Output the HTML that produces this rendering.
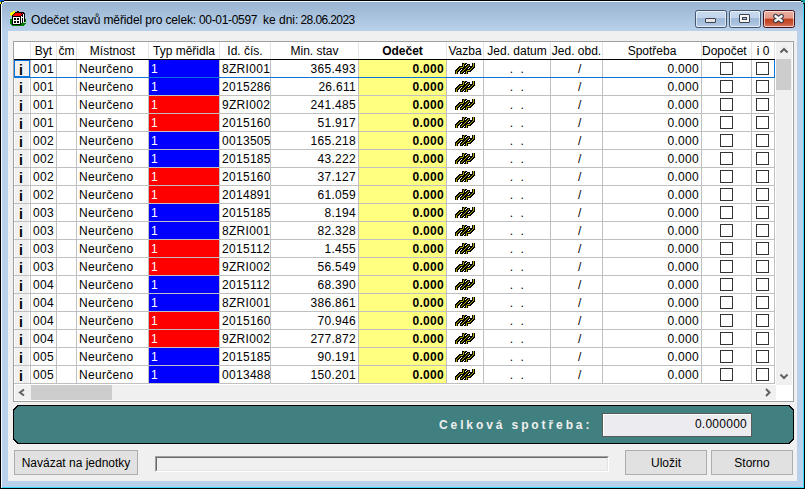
<!DOCTYPE html><html><head><meta charset="utf-8"><style>
*{margin:0;padding:0;box-sizing:border-box}
html,body{width:805px;height:489px;overflow:hidden;background:#b9d1ea}
body{position:relative;font-family:"Liberation Sans",sans-serif;font-size:12px;color:#000}
.ab{position:absolute}
.t{position:absolute;white-space:nowrap;line-height:14px;height:14px}
.cell{position:absolute;overflow:hidden;white-space:nowrap;line-height:17px;height:17px;letter-spacing:0.3px}
.tx{position:absolute;white-space:nowrap;line-height:17px;height:17px;letter-spacing:0.3px}
.cb{position:absolute;width:13px;height:13px;border:1px solid #333;background:#fff}
.capbtn{position:absolute;top:10px;height:18px;border:1px solid #45546a;border-radius:2.5px;
 background:linear-gradient(#c8daee 0,#c2d5eb 42%,#9fbad9 47%,#a6bfdc 75%,#b9d0ea 100%);box-shadow:inset 0 0 0 1px rgba(255,255,255,.6)}
.btn{position:absolute;height:25px;border:1px solid #adadad;background:#e1e1e1;text-align:center;line-height:24px}
</style></head><body>
<svg width="0" height="0" style="position:absolute"><defs><g id="vz"><rect x="2" y="9" width="1" height="1" fill="#000"/><rect x="2" y="10" width="1" height="1" fill="#000"/><rect x="2" y="11" width="1" height="1" fill="#000"/><rect x="2" y="12" width="1" height="1" fill="#000"/><rect x="3" y="8" width="1" height="1" fill="#000"/><rect x="3" y="9" width="1" height="1" fill="#000"/><rect x="3" y="10" width="1" height="1" fill="#000"/><rect x="3" y="11" width="1" height="1" fill="#000"/><rect x="3" y="12" width="1" height="1" fill="#000"/><rect x="4" y="7" width="1" height="1" fill="#000"/><rect x="4" y="8" width="1" height="1" fill="#000"/><rect x="4" y="9" width="1" height="1" fill="#000"/><rect x="4" y="10" width="1" height="1" fill="#000"/><rect x="4" y="11" width="1" height="1" fill="#000"/><rect x="4" y="12" width="1" height="1" fill="#000"/><rect x="5" y="6" width="1" height="1" fill="#000"/><rect x="5" y="7" width="1" height="1" fill="#000"/><rect x="5" y="8" width="1" height="1" fill="#000"/><rect x="5" y="9" width="1" height="1" fill="#000"/><rect x="5" y="10" width="1" height="1" fill="#000"/><rect x="6" y="5" width="1" height="1" fill="#000"/><rect x="6" y="6" width="1" height="1" fill="#000"/><rect x="6" y="7" width="1" height="1" fill="#000"/><rect x="6" y="8" width="1" height="1" fill="#000"/><rect x="6" y="9" width="1" height="1" fill="#000"/><rect x="7" y="5" width="1" height="1" fill="#000"/><rect x="7" y="6" width="1" height="1" fill="#000"/><rect x="7" y="7" width="1" height="1" fill="#000"/><rect x="7" y="8" width="1" height="1" fill="#000"/><rect x="7" y="10" width="1" height="1" fill="#000"/><rect x="7" y="11" width="1" height="1" fill="#000"/><rect x="7" y="12" width="1" height="1" fill="#000"/><rect x="8" y="5" width="1" height="1" fill="#000"/><rect x="8" y="6" width="1" height="1" fill="#000"/><rect x="8" y="7" width="1" height="1" fill="#000"/><rect x="8" y="9" width="1" height="1" fill="#000"/><rect x="8" y="10" width="1" height="1" fill="#000"/><rect x="8" y="11" width="1" height="1" fill="#000"/><rect x="8" y="12" width="1" height="1" fill="#000"/><rect x="9" y="2" width="1" height="1" fill="#000"/><rect x="9" y="3" width="1" height="1" fill="#000"/><rect x="9" y="4" width="1" height="1" fill="#000"/><rect x="9" y="5" width="1" height="1" fill="#000"/><rect x="9" y="6" width="1" height="1" fill="#000"/><rect x="9" y="7" width="1" height="1" fill="#000"/><rect x="9" y="8" width="1" height="1" fill="#000"/><rect x="9" y="9" width="1" height="1" fill="#000"/><rect x="9" y="10" width="1" height="1" fill="#000"/><rect x="9" y="11" width="1" height="1" fill="#000"/><rect x="9" y="12" width="1" height="1" fill="#000"/><rect x="10" y="2" width="1" height="1" fill="#000"/><rect x="10" y="3" width="1" height="1" fill="#000"/><rect x="10" y="4" width="1" height="1" fill="#000"/><rect x="10" y="5" width="1" height="1" fill="#000"/><rect x="10" y="6" width="1" height="1" fill="#000"/><rect x="10" y="7" width="1" height="1" fill="#000"/><rect x="10" y="8" width="1" height="1" fill="#000"/><rect x="10" y="9" width="1" height="1" fill="#000"/><rect x="10" y="10" width="1" height="1" fill="#000"/><rect x="10" y="11" width="1" height="1" fill="#000"/><rect x="11" y="2" width="1" height="1" fill="#000"/><rect x="11" y="3" width="1" height="1" fill="#000"/><rect x="11" y="4" width="1" height="1" fill="#000"/><rect x="11" y="5" width="1" height="1" fill="#000"/><rect x="11" y="6" width="1" height="1" fill="#000"/><rect x="11" y="7" width="1" height="1" fill="#000"/><rect x="11" y="8" width="1" height="1" fill="#000"/><rect x="11" y="9" width="1" height="1" fill="#000"/><rect x="11" y="10" width="1" height="1" fill="#000"/><rect x="11" y="12" width="1" height="1" fill="#000"/><rect x="12" y="2" width="1" height="1" fill="#000"/><rect x="12" y="3" width="1" height="1" fill="#000"/><rect x="12" y="5" width="1" height="1" fill="#000"/><rect x="12" y="6" width="1" height="1" fill="#000"/><rect x="12" y="7" width="1" height="1" fill="#000"/><rect x="12" y="8" width="1" height="1" fill="#000"/><rect x="12" y="9" width="1" height="1" fill="#000"/><rect x="12" y="10" width="1" height="1" fill="#000"/><rect x="12" y="11" width="1" height="1" fill="#000"/><rect x="12" y="12" width="1" height="1" fill="#000"/><rect x="13" y="2" width="1" height="1" fill="#000"/><rect x="13" y="4" width="1" height="1" fill="#000"/><rect x="13" y="5" width="1" height="1" fill="#000"/><rect x="13" y="6" width="1" height="1" fill="#000"/><rect x="13" y="7" width="1" height="1" fill="#000"/><rect x="13" y="8" width="1" height="1" fill="#000"/><rect x="13" y="9" width="1" height="1" fill="#000"/><rect x="13" y="10" width="1" height="1" fill="#000"/><rect x="13" y="11" width="1" height="1" fill="#000"/><rect x="13" y="12" width="1" height="1" fill="#000"/><rect x="14" y="3" width="1" height="1" fill="#000"/><rect x="14" y="4" width="1" height="1" fill="#000"/><rect x="14" y="5" width="1" height="1" fill="#000"/><rect x="14" y="6" width="1" height="1" fill="#000"/><rect x="14" y="7" width="1" height="1" fill="#000"/><rect x="14" y="8" width="1" height="1" fill="#000"/><rect x="14" y="9" width="1" height="1" fill="#000"/><rect x="14" y="10" width="1" height="1" fill="#000"/><rect x="14" y="11" width="1" height="1" fill="#000"/><rect x="14" y="12" width="1" height="1" fill="#000"/><rect x="15" y="3" width="1" height="1" fill="#000"/><rect x="15" y="4" width="1" height="1" fill="#000"/><rect x="15" y="5" width="1" height="1" fill="#000"/><rect x="15" y="6" width="1" height="1" fill="#000"/><rect x="15" y="8" width="1" height="1" fill="#000"/><rect x="15" y="9" width="1" height="1" fill="#000"/><rect x="15" y="10" width="1" height="1" fill="#000"/><rect x="16" y="3" width="1" height="1" fill="#000"/><rect x="16" y="4" width="1" height="1" fill="#000"/><rect x="16" y="5" width="1" height="1" fill="#000"/><rect x="16" y="7" width="1" height="1" fill="#000"/><rect x="16" y="8" width="1" height="1" fill="#000"/><rect x="16" y="9" width="1" height="1" fill="#000"/><rect x="16" y="10" width="1" height="1" fill="#000"/><rect x="17" y="5" width="1" height="1" fill="#000"/><rect x="17" y="6" width="1" height="1" fill="#000"/><rect x="17" y="7" width="1" height="1" fill="#000"/><rect x="17" y="8" width="1" height="1" fill="#000"/><rect x="17" y="9" width="1" height="1" fill="#000"/><rect x="17" y="10" width="1" height="1" fill="#000"/><rect x="18" y="5" width="1" height="1" fill="#000"/><rect x="18" y="6" width="1" height="1" fill="#000"/><rect x="18" y="7" width="1" height="1" fill="#000"/><rect x="18" y="8" width="1" height="1" fill="#000"/><rect x="18" y="9" width="1" height="1" fill="#000"/><rect x="19" y="2" width="1" height="1" fill="#000"/><rect x="19" y="3" width="1" height="1" fill="#000"/><rect x="19" y="4" width="1" height="1" fill="#000"/><rect x="19" y="5" width="1" height="1" fill="#000"/><rect x="19" y="6" width="1" height="1" fill="#000"/><rect x="19" y="7" width="1" height="1" fill="#000"/><rect x="19" y="8" width="1" height="1" fill="#000"/><rect x="20" y="2" width="1" height="1" fill="#000"/><rect x="20" y="3" width="1" height="1" fill="#000"/><rect x="20" y="4" width="1" height="1" fill="#000"/><rect x="20" y="5" width="1" height="1" fill="#000"/><rect x="20" y="6" width="1" height="1" fill="#000"/><rect x="20" y="7" width="1" height="1" fill="#000"/><rect x="21" y="2" width="1" height="1" fill="#000"/><rect x="21" y="3" width="1" height="1" fill="#000"/><rect x="21" y="4" width="1" height="1" fill="#000"/><rect x="21" y="5" width="1" height="1" fill="#000"/><rect x="21" y="6" width="1" height="1" fill="#000"/><rect x="3" y="10" width="1" height="1" fill="#b0a800"/><rect x="3" y="11" width="1" height="1" fill="#b0a800"/><rect x="3" y="12" width="1" height="1" fill="#b0a800"/><rect x="4" y="9" width="1" height="1" fill="#b0a800"/><rect x="5" y="8" width="1" height="1" fill="#b0a800"/><rect x="6" y="7" width="1" height="1" fill="#b0a800"/><rect x="7" y="6" width="1" height="1" fill="#b0a800"/><rect x="8" y="6" width="1" height="1" fill="#b0a800"/><rect x="9" y="6" width="1" height="1" fill="#b0a800"/><rect x="11" y="2" width="1" height="1" fill="#b0a800"/><rect x="10" y="3" width="1" height="1" fill="#b0a800"/><rect x="10" y="4" width="1" height="1" fill="#b0a800"/><rect x="10" y="5" width="1" height="1" fill="#b0a800"/><rect x="20" y="2" width="1" height="1" fill="#b0a800"/><rect x="20" y="3" width="1" height="1" fill="#b0a800"/><rect x="20" y="4" width="1" height="1" fill="#b0a800"/><rect x="20" y="5" width="1" height="1" fill="#b0a800"/><rect x="19" y="6" width="1" height="1" fill="#b0a800"/><rect x="18" y="7" width="1" height="1" fill="#b0a800"/><rect x="17" y="8" width="1" height="1" fill="#b0a800"/><rect x="14" y="9" width="1" height="1" fill="#b0a800"/><rect x="15" y="9" width="1" height="1" fill="#b0a800"/><rect x="16" y="9" width="1" height="1" fill="#b0a800"/><rect x="13" y="10" width="1" height="1" fill="#b0a800"/><rect x="13" y="11" width="1" height="1" fill="#b0a800"/><rect x="13" y="12" width="1" height="1" fill="#b0a800"/><rect x="8" y="11" width="1" height="1" fill="#b0a800"/><rect x="9" y="10" width="1" height="1" fill="#b0a800"/><rect x="10" y="9" width="1" height="1" fill="#b0a800"/><rect x="11" y="8" width="1" height="1" fill="#b0a800"/><rect x="12" y="7" width="1" height="1" fill="#b0a800"/><rect x="13" y="6" width="1" height="1" fill="#b0a800"/><rect x="14" y="5" width="1" height="1" fill="#b0a800"/><rect x="15" y="4" width="1" height="1" fill="#b0a800"/></g></defs></svg>
<div style="position:absolute;left:0px;top:0px;width:805px;height:489px;background:#000"></div>
<div style="position:absolute;left:1px;top:1px;width:803px;height:487px;background:#38d8f8"></div>
<div style="position:absolute;left:1px;top:1px;width:803px;height:1px;background:#f4f8fc"></div>
<div style="position:absolute;left:1px;top:1px;width:1px;height:487px;background:#f4f8fc"></div>
<div class="ab" style="left:2px;top:2px;width:801px;height:485px;background:#b9d1ea"></div>
<div class="ab" style="left:2px;top:2px;width:801px;height:29px;background:linear-gradient(#99b4d1,#b9d1ea)"></div>
<div style="position:absolute;left:0px;top:0px;width:4px;height:1px;background:#0060d8"></div>
<div style="position:absolute;left:0px;top:1px;width:2px;height:1px;background:#0060d8"></div>
<div style="position:absolute;left:0px;top:2px;width:1px;height:2px;background:#ffff00"></div>
<div style="position:absolute;left:1px;top:1px;width:1px;height:3px;background:#202020"></div>
<div style="position:absolute;left:2px;top:1px;width:2px;height:1px;background:#202020"></div>
<div style="position:absolute;left:2px;top:2px;width:1px;height:2px;background:#e8f0f8"></div>
<div style="position:absolute;left:3px;top:2px;width:1px;height:1px;background:#e8f0f8"></div>
<div style="position:absolute;left:801px;top:0px;width:4px;height:1px;background:#10a0a0"></div>
<div style="position:absolute;left:803px;top:1px;width:2px;height:2px;background:#10a0a0"></div>
<div style="position:absolute;left:802px;top:1px;width:1px;height:1px;background:#202020"></div>
<div style="position:absolute;left:803px;top:3px;width:1px;height:1px;background:#202020"></div>
<div style="position:absolute;left:801px;top:1px;width:1px;height:1px;background:#202020"></div>
<div style="position:absolute;left:802px;top:2px;width:1px;height:1px;background:#c8f4ff"></div>
<svg class="ab" style="left:9px;top:10px" width="18" height="18" viewBox="0 0 18 18" shape-rendering="crispEdges"><rect x="1" y="9" width="16" height="5" fill="#008000"/><rect x="2" y="14" width="14" height="1" fill="#008000"/><rect x="3" y="15" width="12" height="1" fill="#008000"/><rect x="4" y="1" width="2" height="1" fill="#ffff00"/><rect x="2" y="2" width="4" height="1" fill="#ffff00"/><rect x="1" y="3" width="4" height="1" fill="#ffff00"/><rect x="1" y="4" width="3" height="1" fill="#ffff00"/><rect x="2" y="5" width="1" height="1" fill="#ffff00"/><rect x="8" y="1" width="2" height="2" fill="#000"/><rect x="6" y="2" width="9" height="1" fill="#000"/><rect x="5" y="3" width="1" height="1" fill="#000"/><rect x="4" y="4" width="1" height="1" fill="#000"/><rect x="3" y="5" width="1" height="1" fill="#000"/><rect x="6" y="3" width="6" height="1" fill="#ff0000"/><rect x="5" y="4" width="7" height="1" fill="#ff0000"/><rect x="4" y="5" width="8" height="1" fill="#ff0000"/><rect x="12" y="3" width="4" height="10" fill="#000"/><rect x="12" y="3" width="1" height="1" fill="#000"/><rect x="13" y="3" width="1" height="1" fill="#ff0000"/><rect x="12" y="4" width="1" height="1" fill="#ff0000"/><rect x="12" y="6" width="1" height="7" fill="#fff"/><rect x="14" y="4" width="1" height="8" fill="#fff"/><rect x="13" y="7" width="1" height="1" fill="#fff"/><rect x="14" y="12" width="3" height="1" fill="#c8c8c8"/><rect x="3" y="6" width="9" height="9" fill="#000"/><rect x="4" y="7" width="7" height="7" fill="#fff"/><rect x="5" y="8" width="2" height="2" fill="#000"/><rect x="8" y="8" width="2" height="2" fill="#000"/><rect x="5" y="11" width="2" height="2" fill="#000"/><rect x="8" y="11" width="2" height="2" fill="#000"/></svg>
<div class="t" style="left:31px;top:13px;letter-spacing:-0.12px">Odečet stavů měřidel pro celek:</div>
<div class="t" style="left:199px;top:13px;letter-spacing:-0.33px">00-01-0597</div>
<div class="t" style="left:263px;top:13px;">ke dni:</div>
<div class="t" style="left:300.5px;top:13px;letter-spacing:-0.6px">28.06.2023</div>
<div class="capbtn" style="left:695px;width:32px"></div>
<div class="ab" style="left:705px;top:18px;width:11px;height:5px;border:1px solid #3a4250;border-radius:1px;background:#e6e6e6"></div>
<div class="capbtn" style="left:729px;width:32px"></div>
<div class="ab" style="left:739px;top:14px;width:11px;height:9px;border:1px solid #3a4250;border-radius:1px;background:#f4f4f4"></div>
<div class="ab" style="left:742px;top:17px;width:5px;height:3px;border:1px solid #3a4250;background:#a8c0dc"></div>
<div class="capbtn" style="left:763px;width:32px;border-color:#4a1018;background:linear-gradient(#eab0a0 0,#e49a88 45%,#c0401c 50%,#c85030 75%,#d87a64 100%)"></div>
<svg class="ab" style="left:772px;top:13px" width="14" height="11" viewBox="0 0 14 11"><path d="M3.5 3.2L9.5 7.8M9.5 3.2L3.5 7.8" stroke="#3a3a4a" stroke-width="4.8" stroke-linecap="round"/><path d="M3.5 3.2L9.5 7.8M9.5 3.2L3.5 7.8" stroke="#f4f4f4" stroke-width="2.7" stroke-linecap="round"/></svg>
<div style="position:absolute;left:8px;top:31px;width:789px;height:450px;background:#f0f0f0"></div>
<div class="ab" style="left:13px;top:41px;width:781px;height:361px;border:1px solid #a0a0a0;background:#fff"></div>
<div style="position:absolute;left:30px;top:42px;width:1px;height:17px;background:#e5e5e5"></div>
<div class="cell" style="left:31px;top:43px;width:25px;height:16px;text-align:center;font-weight:normal;line-height:17px;letter-spacing:0">Byt</div>
<div style="position:absolute;left:56px;top:42px;width:1px;height:17px;background:#e5e5e5"></div>
<div class="cell" style="left:57px;top:43px;width:19px;height:16px;text-align:center;font-weight:normal;line-height:17px;letter-spacing:0">čm</div>
<div style="position:absolute;left:76px;top:42px;width:1px;height:17px;background:#e5e5e5"></div>
<div class="cell" style="left:77px;top:43px;width:71px;height:16px;text-align:center;font-weight:normal;line-height:17px;letter-spacing:0">Místnost</div>
<div style="position:absolute;left:148px;top:42px;width:1px;height:17px;background:#e5e5e5"></div>
<div class="cell" style="left:149px;top:43px;width:70px;height:16px;text-align:center;font-weight:normal;line-height:17px;letter-spacing:0">Typ měřidla</div>
<div style="position:absolute;left:219px;top:42px;width:1px;height:17px;background:#e5e5e5"></div>
<div class="cell" style="left:220px;top:43px;width:50px;height:16px;text-align:center;font-weight:normal;line-height:17px;letter-spacing:0">Id. čís.</div>
<div style="position:absolute;left:270px;top:42px;width:1px;height:17px;background:#e5e5e5"></div>
<div class="cell" style="left:271px;top:43px;width:87px;height:16px;text-align:center;font-weight:normal;line-height:17px;letter-spacing:0">Min. stav</div>
<div style="position:absolute;left:358px;top:42px;width:1px;height:17px;background:#e5e5e5"></div>
<div class="cell" style="left:359px;top:43px;width:87px;height:16px;text-align:center;font-weight:bold;line-height:17px;letter-spacing:0">Odečet</div>
<div style="position:absolute;left:446px;top:42px;width:1px;height:17px;background:#e5e5e5"></div>
<div class="cell" style="left:447px;top:43px;width:36px;height:16px;text-align:center;font-weight:normal;line-height:17px;letter-spacing:0">Vazba</div>
<div style="position:absolute;left:483px;top:42px;width:1px;height:17px;background:#e5e5e5"></div>
<div class="cell" style="left:484px;top:43px;width:66px;height:16px;text-align:center;font-weight:normal;line-height:17px;letter-spacing:0">Jed. datum</div>
<div style="position:absolute;left:550px;top:42px;width:1px;height:17px;background:#e5e5e5"></div>
<div class="cell" style="left:551px;top:43px;width:51px;height:16px;text-align:center;font-weight:normal;line-height:17px;letter-spacing:0">Jed. obd.</div>
<div style="position:absolute;left:602px;top:42px;width:1px;height:17px;background:#e5e5e5"></div>
<div class="cell" style="left:603px;top:43px;width:98px;height:16px;text-align:center;font-weight:normal;line-height:17px;letter-spacing:0">Spotřeba</div>
<div style="position:absolute;left:701px;top:42px;width:1px;height:17px;background:#e5e5e5"></div>
<div class="cell" style="left:702px;top:43px;width:49px;height:16px;text-align:left;font-weight:normal;line-height:17px;letter-spacing:0">Dopočet</div>
<div style="position:absolute;left:751px;top:42px;width:1px;height:17px;background:#e5e5e5"></div>
<div class="cell" style="left:752px;top:43px;width:22px;height:16px;text-align:center;font-weight:normal;line-height:17px;letter-spacing:0">i 0</div>
<div style="position:absolute;left:774px;top:42px;width:1px;height:17px;background:#e5e5e5"></div>
<div style="position:absolute;left:14px;top:59px;width:761px;height:1px;background:#000"></div>
<div style="position:absolute;left:14px;top:77px;width:761px;height:1px;background:#0a74da"></div>
<div style="position:absolute;left:30px;top:60px;width:1px;height:17px;background:#c0c0c0"></div>
<div style="position:absolute;left:56px;top:60px;width:1px;height:17px;background:#c0c0c0"></div>
<div style="position:absolute;left:76px;top:60px;width:1px;height:17px;background:#c0c0c0"></div>
<div style="position:absolute;left:148px;top:60px;width:1px;height:17px;background:#c0c0c0"></div>
<div style="position:absolute;left:219px;top:60px;width:1px;height:17px;background:#c0c0c0"></div>
<div style="position:absolute;left:270px;top:60px;width:1px;height:17px;background:#c0c0c0"></div>
<div style="position:absolute;left:358px;top:60px;width:1px;height:17px;background:#c0c0c0"></div>
<div style="position:absolute;left:446px;top:60px;width:1px;height:17px;background:#c0c0c0"></div>
<div style="position:absolute;left:483px;top:60px;width:1px;height:17px;background:#c0c0c0"></div>
<div style="position:absolute;left:550px;top:60px;width:1px;height:17px;background:#c0c0c0"></div>
<div style="position:absolute;left:602px;top:60px;width:1px;height:17px;background:#c0c0c0"></div>
<div style="position:absolute;left:701px;top:60px;width:1px;height:17px;background:#c0c0c0"></div>
<div style="position:absolute;left:751px;top:60px;width:1px;height:17px;background:#c0c0c0"></div>
<div style="position:absolute;left:774px;top:60px;width:1px;height:17px;background:#c0c0c0"></div>
<div style="position:absolute;left:14px;top:60px;width:16px;height:17px;background:#fff"></div>
<div style="position:absolute;left:15px;top:60px;width:14px;height:17px;background:#f0f0f0"></div>
<div class="tx" style="left:19px;top:63px;font-weight:bold;font-size:14px;line-height:15px;height:15px">i</div>
<div class="tx" style="left:33px;top:61px">001</div>
<div class="tx" style="left:79px;top:61px">Neurčeno</div>
<div style="position:absolute;left:149px;top:60px;width:70px;height:17px;background:#0000ff"></div>
<div class="tx" style="left:151px;top:61px;color:#fff">1</div>
<div class="cell" style="left:222px;top:61px;width:48px;height:16px">8ZRI001</div>
<div class="tx" style="left:271px;top:61px;width:85px;text-align:right">365.493</div>
<div style="position:absolute;left:359px;top:60px;width:87px;height:17px;background:#ffff80"></div>
<div class="tx" style="left:359px;top:61px;width:85px;text-align:right;font-weight:bold">0.000</div>
<div class="ab" style="left:453px;top:61px;width:24px;height:16px"><svg width="24" height="16" viewBox="0 0 24 16" shape-rendering="crispEdges" style="position:absolute;left:0;top:0"><use href="#vz"/></svg></div>
<div class="tx" style="left:484px;top:61px;width:66px;text-align:center">.&nbsp; .</div>
<div class="tx" style="left:578px;top:61px">/</div>
<div class="tx" style="left:603px;top:61px;width:96px;text-align:right">0.000</div>
<div class="cb" style="left:720px;top:62px"></div>
<div class="cb" style="left:756px;top:62px"></div>
<div style="position:absolute;left:14px;top:95px;width:761px;height:1px;background:#c0c0c0"></div>
<div style="position:absolute;left:30px;top:78px;width:1px;height:17px;background:#c0c0c0"></div>
<div style="position:absolute;left:56px;top:78px;width:1px;height:17px;background:#c0c0c0"></div>
<div style="position:absolute;left:76px;top:78px;width:1px;height:17px;background:#c0c0c0"></div>
<div style="position:absolute;left:148px;top:78px;width:1px;height:17px;background:#c0c0c0"></div>
<div style="position:absolute;left:219px;top:78px;width:1px;height:17px;background:#c0c0c0"></div>
<div style="position:absolute;left:270px;top:78px;width:1px;height:17px;background:#c0c0c0"></div>
<div style="position:absolute;left:358px;top:78px;width:1px;height:17px;background:#c0c0c0"></div>
<div style="position:absolute;left:446px;top:78px;width:1px;height:17px;background:#c0c0c0"></div>
<div style="position:absolute;left:483px;top:78px;width:1px;height:17px;background:#c0c0c0"></div>
<div style="position:absolute;left:550px;top:78px;width:1px;height:17px;background:#c0c0c0"></div>
<div style="position:absolute;left:602px;top:78px;width:1px;height:17px;background:#c0c0c0"></div>
<div style="position:absolute;left:701px;top:78px;width:1px;height:17px;background:#c0c0c0"></div>
<div style="position:absolute;left:751px;top:78px;width:1px;height:17px;background:#c0c0c0"></div>
<div style="position:absolute;left:774px;top:78px;width:1px;height:17px;background:#c0c0c0"></div>
<div style="position:absolute;left:14px;top:78px;width:16px;height:17px;background:#fff"></div>
<div style="position:absolute;left:15px;top:78px;width:14px;height:17px;background:#f0f0f0"></div>
<div class="tx" style="left:19px;top:81px;font-weight:bold;font-size:14px;line-height:15px;height:15px">i</div>
<div class="tx" style="left:33px;top:79px">001</div>
<div class="tx" style="left:79px;top:79px">Neurčeno</div>
<div style="position:absolute;left:149px;top:78px;width:70px;height:17px;background:#0000ff"></div>
<div class="tx" style="left:151px;top:79px;color:#fff">1</div>
<div class="cell" style="left:222px;top:79px;width:48px;height:16px">2015286</div>
<div class="tx" style="left:271px;top:79px;width:85px;text-align:right">26.611</div>
<div style="position:absolute;left:359px;top:78px;width:87px;height:17px;background:#ffff80"></div>
<div class="tx" style="left:359px;top:79px;width:85px;text-align:right;font-weight:bold">0.000</div>
<div class="ab" style="left:453px;top:79px;width:24px;height:16px"><svg width="24" height="16" viewBox="0 0 24 16" shape-rendering="crispEdges" style="position:absolute;left:0;top:0"><use href="#vz"/></svg></div>
<div class="tx" style="left:484px;top:79px;width:66px;text-align:center">.&nbsp; .</div>
<div class="tx" style="left:578px;top:79px">/</div>
<div class="tx" style="left:603px;top:79px;width:96px;text-align:right">0.000</div>
<div class="cb" style="left:720px;top:80px"></div>
<div class="cb" style="left:756px;top:80px"></div>
<div style="position:absolute;left:14px;top:113px;width:761px;height:1px;background:#c0c0c0"></div>
<div style="position:absolute;left:30px;top:96px;width:1px;height:17px;background:#c0c0c0"></div>
<div style="position:absolute;left:56px;top:96px;width:1px;height:17px;background:#c0c0c0"></div>
<div style="position:absolute;left:76px;top:96px;width:1px;height:17px;background:#c0c0c0"></div>
<div style="position:absolute;left:148px;top:96px;width:1px;height:17px;background:#c0c0c0"></div>
<div style="position:absolute;left:219px;top:96px;width:1px;height:17px;background:#c0c0c0"></div>
<div style="position:absolute;left:270px;top:96px;width:1px;height:17px;background:#c0c0c0"></div>
<div style="position:absolute;left:358px;top:96px;width:1px;height:17px;background:#c0c0c0"></div>
<div style="position:absolute;left:446px;top:96px;width:1px;height:17px;background:#c0c0c0"></div>
<div style="position:absolute;left:483px;top:96px;width:1px;height:17px;background:#c0c0c0"></div>
<div style="position:absolute;left:550px;top:96px;width:1px;height:17px;background:#c0c0c0"></div>
<div style="position:absolute;left:602px;top:96px;width:1px;height:17px;background:#c0c0c0"></div>
<div style="position:absolute;left:701px;top:96px;width:1px;height:17px;background:#c0c0c0"></div>
<div style="position:absolute;left:751px;top:96px;width:1px;height:17px;background:#c0c0c0"></div>
<div style="position:absolute;left:774px;top:96px;width:1px;height:17px;background:#c0c0c0"></div>
<div style="position:absolute;left:14px;top:96px;width:16px;height:17px;background:#fff"></div>
<div style="position:absolute;left:15px;top:96px;width:14px;height:17px;background:#f0f0f0"></div>
<div class="tx" style="left:19px;top:99px;font-weight:bold;font-size:14px;line-height:15px;height:15px">i</div>
<div class="tx" style="left:33px;top:97px">001</div>
<div class="tx" style="left:79px;top:97px">Neurčeno</div>
<div style="position:absolute;left:149px;top:96px;width:70px;height:17px;background:#ff0000"></div>
<div class="tx" style="left:151px;top:97px;color:#fff">1</div>
<div class="cell" style="left:222px;top:97px;width:48px;height:16px">9ZRI002</div>
<div class="tx" style="left:271px;top:97px;width:85px;text-align:right">241.485</div>
<div style="position:absolute;left:359px;top:96px;width:87px;height:17px;background:#ffff80"></div>
<div class="tx" style="left:359px;top:97px;width:85px;text-align:right;font-weight:bold">0.000</div>
<div class="ab" style="left:453px;top:97px;width:24px;height:16px"><svg width="24" height="16" viewBox="0 0 24 16" shape-rendering="crispEdges" style="position:absolute;left:0;top:0"><use href="#vz"/></svg></div>
<div class="tx" style="left:484px;top:97px;width:66px;text-align:center">.&nbsp; .</div>
<div class="tx" style="left:578px;top:97px">/</div>
<div class="tx" style="left:603px;top:97px;width:96px;text-align:right">0.000</div>
<div class="cb" style="left:720px;top:98px"></div>
<div class="cb" style="left:756px;top:98px"></div>
<div style="position:absolute;left:14px;top:131px;width:761px;height:1px;background:#c0c0c0"></div>
<div style="position:absolute;left:30px;top:114px;width:1px;height:17px;background:#c0c0c0"></div>
<div style="position:absolute;left:56px;top:114px;width:1px;height:17px;background:#c0c0c0"></div>
<div style="position:absolute;left:76px;top:114px;width:1px;height:17px;background:#c0c0c0"></div>
<div style="position:absolute;left:148px;top:114px;width:1px;height:17px;background:#c0c0c0"></div>
<div style="position:absolute;left:219px;top:114px;width:1px;height:17px;background:#c0c0c0"></div>
<div style="position:absolute;left:270px;top:114px;width:1px;height:17px;background:#c0c0c0"></div>
<div style="position:absolute;left:358px;top:114px;width:1px;height:17px;background:#c0c0c0"></div>
<div style="position:absolute;left:446px;top:114px;width:1px;height:17px;background:#c0c0c0"></div>
<div style="position:absolute;left:483px;top:114px;width:1px;height:17px;background:#c0c0c0"></div>
<div style="position:absolute;left:550px;top:114px;width:1px;height:17px;background:#c0c0c0"></div>
<div style="position:absolute;left:602px;top:114px;width:1px;height:17px;background:#c0c0c0"></div>
<div style="position:absolute;left:701px;top:114px;width:1px;height:17px;background:#c0c0c0"></div>
<div style="position:absolute;left:751px;top:114px;width:1px;height:17px;background:#c0c0c0"></div>
<div style="position:absolute;left:774px;top:114px;width:1px;height:17px;background:#c0c0c0"></div>
<div style="position:absolute;left:14px;top:114px;width:16px;height:17px;background:#fff"></div>
<div style="position:absolute;left:15px;top:114px;width:14px;height:17px;background:#f0f0f0"></div>
<div class="tx" style="left:19px;top:117px;font-weight:bold;font-size:14px;line-height:15px;height:15px">i</div>
<div class="tx" style="left:33px;top:115px">001</div>
<div class="tx" style="left:79px;top:115px">Neurčeno</div>
<div style="position:absolute;left:149px;top:114px;width:70px;height:17px;background:#ff0000"></div>
<div class="tx" style="left:151px;top:115px;color:#fff">1</div>
<div class="cell" style="left:222px;top:115px;width:48px;height:16px">2015160</div>
<div class="tx" style="left:271px;top:115px;width:85px;text-align:right">51.917</div>
<div style="position:absolute;left:359px;top:114px;width:87px;height:17px;background:#ffff80"></div>
<div class="tx" style="left:359px;top:115px;width:85px;text-align:right;font-weight:bold">0.000</div>
<div class="ab" style="left:453px;top:115px;width:24px;height:16px"><svg width="24" height="16" viewBox="0 0 24 16" shape-rendering="crispEdges" style="position:absolute;left:0;top:0"><use href="#vz"/></svg></div>
<div class="tx" style="left:484px;top:115px;width:66px;text-align:center">.&nbsp; .</div>
<div class="tx" style="left:578px;top:115px">/</div>
<div class="tx" style="left:603px;top:115px;width:96px;text-align:right">0.000</div>
<div class="cb" style="left:720px;top:116px"></div>
<div class="cb" style="left:756px;top:116px"></div>
<div style="position:absolute;left:14px;top:149px;width:761px;height:1px;background:#c0c0c0"></div>
<div style="position:absolute;left:30px;top:132px;width:1px;height:17px;background:#c0c0c0"></div>
<div style="position:absolute;left:56px;top:132px;width:1px;height:17px;background:#c0c0c0"></div>
<div style="position:absolute;left:76px;top:132px;width:1px;height:17px;background:#c0c0c0"></div>
<div style="position:absolute;left:148px;top:132px;width:1px;height:17px;background:#c0c0c0"></div>
<div style="position:absolute;left:219px;top:132px;width:1px;height:17px;background:#c0c0c0"></div>
<div style="position:absolute;left:270px;top:132px;width:1px;height:17px;background:#c0c0c0"></div>
<div style="position:absolute;left:358px;top:132px;width:1px;height:17px;background:#c0c0c0"></div>
<div style="position:absolute;left:446px;top:132px;width:1px;height:17px;background:#c0c0c0"></div>
<div style="position:absolute;left:483px;top:132px;width:1px;height:17px;background:#c0c0c0"></div>
<div style="position:absolute;left:550px;top:132px;width:1px;height:17px;background:#c0c0c0"></div>
<div style="position:absolute;left:602px;top:132px;width:1px;height:17px;background:#c0c0c0"></div>
<div style="position:absolute;left:701px;top:132px;width:1px;height:17px;background:#c0c0c0"></div>
<div style="position:absolute;left:751px;top:132px;width:1px;height:17px;background:#c0c0c0"></div>
<div style="position:absolute;left:774px;top:132px;width:1px;height:17px;background:#c0c0c0"></div>
<div style="position:absolute;left:14px;top:132px;width:16px;height:17px;background:#fff"></div>
<div style="position:absolute;left:15px;top:132px;width:14px;height:17px;background:#f0f0f0"></div>
<div class="tx" style="left:19px;top:135px;font-weight:bold;font-size:14px;line-height:15px;height:15px">i</div>
<div class="tx" style="left:33px;top:133px">002</div>
<div class="tx" style="left:79px;top:133px">Neurčeno</div>
<div style="position:absolute;left:149px;top:132px;width:70px;height:17px;background:#0000ff"></div>
<div class="tx" style="left:151px;top:133px;color:#fff">1</div>
<div class="cell" style="left:222px;top:133px;width:48px;height:16px">0013505</div>
<div class="tx" style="left:271px;top:133px;width:85px;text-align:right">165.218</div>
<div style="position:absolute;left:359px;top:132px;width:87px;height:17px;background:#ffff80"></div>
<div class="tx" style="left:359px;top:133px;width:85px;text-align:right;font-weight:bold">0.000</div>
<div class="ab" style="left:453px;top:133px;width:24px;height:16px"><svg width="24" height="16" viewBox="0 0 24 16" shape-rendering="crispEdges" style="position:absolute;left:0;top:0"><use href="#vz"/></svg></div>
<div class="tx" style="left:484px;top:133px;width:66px;text-align:center">.&nbsp; .</div>
<div class="tx" style="left:578px;top:133px">/</div>
<div class="tx" style="left:603px;top:133px;width:96px;text-align:right">0.000</div>
<div class="cb" style="left:720px;top:134px"></div>
<div class="cb" style="left:756px;top:134px"></div>
<div style="position:absolute;left:14px;top:167px;width:761px;height:1px;background:#c0c0c0"></div>
<div style="position:absolute;left:30px;top:150px;width:1px;height:17px;background:#c0c0c0"></div>
<div style="position:absolute;left:56px;top:150px;width:1px;height:17px;background:#c0c0c0"></div>
<div style="position:absolute;left:76px;top:150px;width:1px;height:17px;background:#c0c0c0"></div>
<div style="position:absolute;left:148px;top:150px;width:1px;height:17px;background:#c0c0c0"></div>
<div style="position:absolute;left:219px;top:150px;width:1px;height:17px;background:#c0c0c0"></div>
<div style="position:absolute;left:270px;top:150px;width:1px;height:17px;background:#c0c0c0"></div>
<div style="position:absolute;left:358px;top:150px;width:1px;height:17px;background:#c0c0c0"></div>
<div style="position:absolute;left:446px;top:150px;width:1px;height:17px;background:#c0c0c0"></div>
<div style="position:absolute;left:483px;top:150px;width:1px;height:17px;background:#c0c0c0"></div>
<div style="position:absolute;left:550px;top:150px;width:1px;height:17px;background:#c0c0c0"></div>
<div style="position:absolute;left:602px;top:150px;width:1px;height:17px;background:#c0c0c0"></div>
<div style="position:absolute;left:701px;top:150px;width:1px;height:17px;background:#c0c0c0"></div>
<div style="position:absolute;left:751px;top:150px;width:1px;height:17px;background:#c0c0c0"></div>
<div style="position:absolute;left:774px;top:150px;width:1px;height:17px;background:#c0c0c0"></div>
<div style="position:absolute;left:14px;top:150px;width:16px;height:17px;background:#fff"></div>
<div style="position:absolute;left:15px;top:150px;width:14px;height:17px;background:#f0f0f0"></div>
<div class="tx" style="left:19px;top:153px;font-weight:bold;font-size:14px;line-height:15px;height:15px">i</div>
<div class="tx" style="left:33px;top:151px">002</div>
<div class="tx" style="left:79px;top:151px">Neurčeno</div>
<div style="position:absolute;left:149px;top:150px;width:70px;height:17px;background:#0000ff"></div>
<div class="tx" style="left:151px;top:151px;color:#fff">1</div>
<div class="cell" style="left:222px;top:151px;width:48px;height:16px">2015185</div>
<div class="tx" style="left:271px;top:151px;width:85px;text-align:right">43.222</div>
<div style="position:absolute;left:359px;top:150px;width:87px;height:17px;background:#ffff80"></div>
<div class="tx" style="left:359px;top:151px;width:85px;text-align:right;font-weight:bold">0.000</div>
<div class="ab" style="left:453px;top:151px;width:24px;height:16px"><svg width="24" height="16" viewBox="0 0 24 16" shape-rendering="crispEdges" style="position:absolute;left:0;top:0"><use href="#vz"/></svg></div>
<div class="tx" style="left:484px;top:151px;width:66px;text-align:center">.&nbsp; .</div>
<div class="tx" style="left:578px;top:151px">/</div>
<div class="tx" style="left:603px;top:151px;width:96px;text-align:right">0.000</div>
<div class="cb" style="left:720px;top:152px"></div>
<div class="cb" style="left:756px;top:152px"></div>
<div style="position:absolute;left:14px;top:185px;width:761px;height:1px;background:#c0c0c0"></div>
<div style="position:absolute;left:30px;top:168px;width:1px;height:17px;background:#c0c0c0"></div>
<div style="position:absolute;left:56px;top:168px;width:1px;height:17px;background:#c0c0c0"></div>
<div style="position:absolute;left:76px;top:168px;width:1px;height:17px;background:#c0c0c0"></div>
<div style="position:absolute;left:148px;top:168px;width:1px;height:17px;background:#c0c0c0"></div>
<div style="position:absolute;left:219px;top:168px;width:1px;height:17px;background:#c0c0c0"></div>
<div style="position:absolute;left:270px;top:168px;width:1px;height:17px;background:#c0c0c0"></div>
<div style="position:absolute;left:358px;top:168px;width:1px;height:17px;background:#c0c0c0"></div>
<div style="position:absolute;left:446px;top:168px;width:1px;height:17px;background:#c0c0c0"></div>
<div style="position:absolute;left:483px;top:168px;width:1px;height:17px;background:#c0c0c0"></div>
<div style="position:absolute;left:550px;top:168px;width:1px;height:17px;background:#c0c0c0"></div>
<div style="position:absolute;left:602px;top:168px;width:1px;height:17px;background:#c0c0c0"></div>
<div style="position:absolute;left:701px;top:168px;width:1px;height:17px;background:#c0c0c0"></div>
<div style="position:absolute;left:751px;top:168px;width:1px;height:17px;background:#c0c0c0"></div>
<div style="position:absolute;left:774px;top:168px;width:1px;height:17px;background:#c0c0c0"></div>
<div style="position:absolute;left:14px;top:168px;width:16px;height:17px;background:#fff"></div>
<div style="position:absolute;left:15px;top:168px;width:14px;height:17px;background:#f0f0f0"></div>
<div class="tx" style="left:19px;top:171px;font-weight:bold;font-size:14px;line-height:15px;height:15px">i</div>
<div class="tx" style="left:33px;top:169px">002</div>
<div class="tx" style="left:79px;top:169px">Neurčeno</div>
<div style="position:absolute;left:149px;top:168px;width:70px;height:17px;background:#ff0000"></div>
<div class="tx" style="left:151px;top:169px;color:#fff">1</div>
<div class="cell" style="left:222px;top:169px;width:48px;height:16px">2015160</div>
<div class="tx" style="left:271px;top:169px;width:85px;text-align:right">37.127</div>
<div style="position:absolute;left:359px;top:168px;width:87px;height:17px;background:#ffff80"></div>
<div class="tx" style="left:359px;top:169px;width:85px;text-align:right;font-weight:bold">0.000</div>
<div class="ab" style="left:453px;top:169px;width:24px;height:16px"><svg width="24" height="16" viewBox="0 0 24 16" shape-rendering="crispEdges" style="position:absolute;left:0;top:0"><use href="#vz"/></svg></div>
<div class="tx" style="left:484px;top:169px;width:66px;text-align:center">.&nbsp; .</div>
<div class="tx" style="left:578px;top:169px">/</div>
<div class="tx" style="left:603px;top:169px;width:96px;text-align:right">0.000</div>
<div class="cb" style="left:720px;top:170px"></div>
<div class="cb" style="left:756px;top:170px"></div>
<div style="position:absolute;left:14px;top:203px;width:761px;height:1px;background:#c0c0c0"></div>
<div style="position:absolute;left:30px;top:186px;width:1px;height:17px;background:#c0c0c0"></div>
<div style="position:absolute;left:56px;top:186px;width:1px;height:17px;background:#c0c0c0"></div>
<div style="position:absolute;left:76px;top:186px;width:1px;height:17px;background:#c0c0c0"></div>
<div style="position:absolute;left:148px;top:186px;width:1px;height:17px;background:#c0c0c0"></div>
<div style="position:absolute;left:219px;top:186px;width:1px;height:17px;background:#c0c0c0"></div>
<div style="position:absolute;left:270px;top:186px;width:1px;height:17px;background:#c0c0c0"></div>
<div style="position:absolute;left:358px;top:186px;width:1px;height:17px;background:#c0c0c0"></div>
<div style="position:absolute;left:446px;top:186px;width:1px;height:17px;background:#c0c0c0"></div>
<div style="position:absolute;left:483px;top:186px;width:1px;height:17px;background:#c0c0c0"></div>
<div style="position:absolute;left:550px;top:186px;width:1px;height:17px;background:#c0c0c0"></div>
<div style="position:absolute;left:602px;top:186px;width:1px;height:17px;background:#c0c0c0"></div>
<div style="position:absolute;left:701px;top:186px;width:1px;height:17px;background:#c0c0c0"></div>
<div style="position:absolute;left:751px;top:186px;width:1px;height:17px;background:#c0c0c0"></div>
<div style="position:absolute;left:774px;top:186px;width:1px;height:17px;background:#c0c0c0"></div>
<div style="position:absolute;left:14px;top:186px;width:16px;height:17px;background:#fff"></div>
<div style="position:absolute;left:15px;top:186px;width:14px;height:17px;background:#f0f0f0"></div>
<div class="tx" style="left:19px;top:189px;font-weight:bold;font-size:14px;line-height:15px;height:15px">i</div>
<div class="tx" style="left:33px;top:187px">002</div>
<div class="tx" style="left:79px;top:187px">Neurčeno</div>
<div style="position:absolute;left:149px;top:186px;width:70px;height:17px;background:#ff0000"></div>
<div class="tx" style="left:151px;top:187px;color:#fff">1</div>
<div class="cell" style="left:222px;top:187px;width:48px;height:16px">2014891</div>
<div class="tx" style="left:271px;top:187px;width:85px;text-align:right">61.059</div>
<div style="position:absolute;left:359px;top:186px;width:87px;height:17px;background:#ffff80"></div>
<div class="tx" style="left:359px;top:187px;width:85px;text-align:right;font-weight:bold">0.000</div>
<div class="ab" style="left:453px;top:187px;width:24px;height:16px"><svg width="24" height="16" viewBox="0 0 24 16" shape-rendering="crispEdges" style="position:absolute;left:0;top:0"><use href="#vz"/></svg></div>
<div class="tx" style="left:484px;top:187px;width:66px;text-align:center">.&nbsp; .</div>
<div class="tx" style="left:578px;top:187px">/</div>
<div class="tx" style="left:603px;top:187px;width:96px;text-align:right">0.000</div>
<div class="cb" style="left:720px;top:188px"></div>
<div class="cb" style="left:756px;top:188px"></div>
<div style="position:absolute;left:14px;top:221px;width:761px;height:1px;background:#c0c0c0"></div>
<div style="position:absolute;left:30px;top:204px;width:1px;height:17px;background:#c0c0c0"></div>
<div style="position:absolute;left:56px;top:204px;width:1px;height:17px;background:#c0c0c0"></div>
<div style="position:absolute;left:76px;top:204px;width:1px;height:17px;background:#c0c0c0"></div>
<div style="position:absolute;left:148px;top:204px;width:1px;height:17px;background:#c0c0c0"></div>
<div style="position:absolute;left:219px;top:204px;width:1px;height:17px;background:#c0c0c0"></div>
<div style="position:absolute;left:270px;top:204px;width:1px;height:17px;background:#c0c0c0"></div>
<div style="position:absolute;left:358px;top:204px;width:1px;height:17px;background:#c0c0c0"></div>
<div style="position:absolute;left:446px;top:204px;width:1px;height:17px;background:#c0c0c0"></div>
<div style="position:absolute;left:483px;top:204px;width:1px;height:17px;background:#c0c0c0"></div>
<div style="position:absolute;left:550px;top:204px;width:1px;height:17px;background:#c0c0c0"></div>
<div style="position:absolute;left:602px;top:204px;width:1px;height:17px;background:#c0c0c0"></div>
<div style="position:absolute;left:701px;top:204px;width:1px;height:17px;background:#c0c0c0"></div>
<div style="position:absolute;left:751px;top:204px;width:1px;height:17px;background:#c0c0c0"></div>
<div style="position:absolute;left:774px;top:204px;width:1px;height:17px;background:#c0c0c0"></div>
<div style="position:absolute;left:14px;top:204px;width:16px;height:17px;background:#fff"></div>
<div style="position:absolute;left:15px;top:204px;width:14px;height:17px;background:#f0f0f0"></div>
<div class="tx" style="left:19px;top:207px;font-weight:bold;font-size:14px;line-height:15px;height:15px">i</div>
<div class="tx" style="left:33px;top:205px">003</div>
<div class="tx" style="left:79px;top:205px">Neurčeno</div>
<div style="position:absolute;left:149px;top:204px;width:70px;height:17px;background:#0000ff"></div>
<div class="tx" style="left:151px;top:205px;color:#fff">1</div>
<div class="cell" style="left:222px;top:205px;width:48px;height:16px">2015185</div>
<div class="tx" style="left:271px;top:205px;width:85px;text-align:right">8.194</div>
<div style="position:absolute;left:359px;top:204px;width:87px;height:17px;background:#ffff80"></div>
<div class="tx" style="left:359px;top:205px;width:85px;text-align:right;font-weight:bold">0.000</div>
<div class="ab" style="left:453px;top:205px;width:24px;height:16px"><svg width="24" height="16" viewBox="0 0 24 16" shape-rendering="crispEdges" style="position:absolute;left:0;top:0"><use href="#vz"/></svg></div>
<div class="tx" style="left:484px;top:205px;width:66px;text-align:center">.&nbsp; .</div>
<div class="tx" style="left:578px;top:205px">/</div>
<div class="tx" style="left:603px;top:205px;width:96px;text-align:right">0.000</div>
<div class="cb" style="left:720px;top:206px"></div>
<div class="cb" style="left:756px;top:206px"></div>
<div style="position:absolute;left:14px;top:239px;width:761px;height:1px;background:#c0c0c0"></div>
<div style="position:absolute;left:30px;top:222px;width:1px;height:17px;background:#c0c0c0"></div>
<div style="position:absolute;left:56px;top:222px;width:1px;height:17px;background:#c0c0c0"></div>
<div style="position:absolute;left:76px;top:222px;width:1px;height:17px;background:#c0c0c0"></div>
<div style="position:absolute;left:148px;top:222px;width:1px;height:17px;background:#c0c0c0"></div>
<div style="position:absolute;left:219px;top:222px;width:1px;height:17px;background:#c0c0c0"></div>
<div style="position:absolute;left:270px;top:222px;width:1px;height:17px;background:#c0c0c0"></div>
<div style="position:absolute;left:358px;top:222px;width:1px;height:17px;background:#c0c0c0"></div>
<div style="position:absolute;left:446px;top:222px;width:1px;height:17px;background:#c0c0c0"></div>
<div style="position:absolute;left:483px;top:222px;width:1px;height:17px;background:#c0c0c0"></div>
<div style="position:absolute;left:550px;top:222px;width:1px;height:17px;background:#c0c0c0"></div>
<div style="position:absolute;left:602px;top:222px;width:1px;height:17px;background:#c0c0c0"></div>
<div style="position:absolute;left:701px;top:222px;width:1px;height:17px;background:#c0c0c0"></div>
<div style="position:absolute;left:751px;top:222px;width:1px;height:17px;background:#c0c0c0"></div>
<div style="position:absolute;left:774px;top:222px;width:1px;height:17px;background:#c0c0c0"></div>
<div style="position:absolute;left:14px;top:222px;width:16px;height:17px;background:#fff"></div>
<div style="position:absolute;left:15px;top:222px;width:14px;height:17px;background:#f0f0f0"></div>
<div class="tx" style="left:19px;top:225px;font-weight:bold;font-size:14px;line-height:15px;height:15px">i</div>
<div class="tx" style="left:33px;top:223px">003</div>
<div class="tx" style="left:79px;top:223px">Neurčeno</div>
<div style="position:absolute;left:149px;top:222px;width:70px;height:17px;background:#0000ff"></div>
<div class="tx" style="left:151px;top:223px;color:#fff">1</div>
<div class="cell" style="left:222px;top:223px;width:48px;height:16px">8ZRI001</div>
<div class="tx" style="left:271px;top:223px;width:85px;text-align:right">82.328</div>
<div style="position:absolute;left:359px;top:222px;width:87px;height:17px;background:#ffff80"></div>
<div class="tx" style="left:359px;top:223px;width:85px;text-align:right;font-weight:bold">0.000</div>
<div class="ab" style="left:453px;top:223px;width:24px;height:16px"><svg width="24" height="16" viewBox="0 0 24 16" shape-rendering="crispEdges" style="position:absolute;left:0;top:0"><use href="#vz"/></svg></div>
<div class="tx" style="left:484px;top:223px;width:66px;text-align:center">.&nbsp; .</div>
<div class="tx" style="left:578px;top:223px">/</div>
<div class="tx" style="left:603px;top:223px;width:96px;text-align:right">0.000</div>
<div class="cb" style="left:720px;top:224px"></div>
<div class="cb" style="left:756px;top:224px"></div>
<div style="position:absolute;left:14px;top:257px;width:761px;height:1px;background:#c0c0c0"></div>
<div style="position:absolute;left:30px;top:240px;width:1px;height:17px;background:#c0c0c0"></div>
<div style="position:absolute;left:56px;top:240px;width:1px;height:17px;background:#c0c0c0"></div>
<div style="position:absolute;left:76px;top:240px;width:1px;height:17px;background:#c0c0c0"></div>
<div style="position:absolute;left:148px;top:240px;width:1px;height:17px;background:#c0c0c0"></div>
<div style="position:absolute;left:219px;top:240px;width:1px;height:17px;background:#c0c0c0"></div>
<div style="position:absolute;left:270px;top:240px;width:1px;height:17px;background:#c0c0c0"></div>
<div style="position:absolute;left:358px;top:240px;width:1px;height:17px;background:#c0c0c0"></div>
<div style="position:absolute;left:446px;top:240px;width:1px;height:17px;background:#c0c0c0"></div>
<div style="position:absolute;left:483px;top:240px;width:1px;height:17px;background:#c0c0c0"></div>
<div style="position:absolute;left:550px;top:240px;width:1px;height:17px;background:#c0c0c0"></div>
<div style="position:absolute;left:602px;top:240px;width:1px;height:17px;background:#c0c0c0"></div>
<div style="position:absolute;left:701px;top:240px;width:1px;height:17px;background:#c0c0c0"></div>
<div style="position:absolute;left:751px;top:240px;width:1px;height:17px;background:#c0c0c0"></div>
<div style="position:absolute;left:774px;top:240px;width:1px;height:17px;background:#c0c0c0"></div>
<div style="position:absolute;left:14px;top:240px;width:16px;height:17px;background:#fff"></div>
<div style="position:absolute;left:15px;top:240px;width:14px;height:17px;background:#f0f0f0"></div>
<div class="tx" style="left:19px;top:243px;font-weight:bold;font-size:14px;line-height:15px;height:15px">i</div>
<div class="tx" style="left:33px;top:241px">003</div>
<div class="tx" style="left:79px;top:241px">Neurčeno</div>
<div style="position:absolute;left:149px;top:240px;width:70px;height:17px;background:#ff0000"></div>
<div class="tx" style="left:151px;top:241px;color:#fff">1</div>
<div class="cell" style="left:222px;top:241px;width:48px;height:16px">2015112</div>
<div class="tx" style="left:271px;top:241px;width:85px;text-align:right">1.455</div>
<div style="position:absolute;left:359px;top:240px;width:87px;height:17px;background:#ffff80"></div>
<div class="tx" style="left:359px;top:241px;width:85px;text-align:right;font-weight:bold">0.000</div>
<div class="ab" style="left:453px;top:241px;width:24px;height:16px"><svg width="24" height="16" viewBox="0 0 24 16" shape-rendering="crispEdges" style="position:absolute;left:0;top:0"><use href="#vz"/></svg></div>
<div class="tx" style="left:484px;top:241px;width:66px;text-align:center">.&nbsp; .</div>
<div class="tx" style="left:578px;top:241px">/</div>
<div class="tx" style="left:603px;top:241px;width:96px;text-align:right">0.000</div>
<div class="cb" style="left:720px;top:242px"></div>
<div class="cb" style="left:756px;top:242px"></div>
<div style="position:absolute;left:14px;top:275px;width:761px;height:1px;background:#c0c0c0"></div>
<div style="position:absolute;left:30px;top:258px;width:1px;height:17px;background:#c0c0c0"></div>
<div style="position:absolute;left:56px;top:258px;width:1px;height:17px;background:#c0c0c0"></div>
<div style="position:absolute;left:76px;top:258px;width:1px;height:17px;background:#c0c0c0"></div>
<div style="position:absolute;left:148px;top:258px;width:1px;height:17px;background:#c0c0c0"></div>
<div style="position:absolute;left:219px;top:258px;width:1px;height:17px;background:#c0c0c0"></div>
<div style="position:absolute;left:270px;top:258px;width:1px;height:17px;background:#c0c0c0"></div>
<div style="position:absolute;left:358px;top:258px;width:1px;height:17px;background:#c0c0c0"></div>
<div style="position:absolute;left:446px;top:258px;width:1px;height:17px;background:#c0c0c0"></div>
<div style="position:absolute;left:483px;top:258px;width:1px;height:17px;background:#c0c0c0"></div>
<div style="position:absolute;left:550px;top:258px;width:1px;height:17px;background:#c0c0c0"></div>
<div style="position:absolute;left:602px;top:258px;width:1px;height:17px;background:#c0c0c0"></div>
<div style="position:absolute;left:701px;top:258px;width:1px;height:17px;background:#c0c0c0"></div>
<div style="position:absolute;left:751px;top:258px;width:1px;height:17px;background:#c0c0c0"></div>
<div style="position:absolute;left:774px;top:258px;width:1px;height:17px;background:#c0c0c0"></div>
<div style="position:absolute;left:14px;top:258px;width:16px;height:17px;background:#fff"></div>
<div style="position:absolute;left:15px;top:258px;width:14px;height:17px;background:#f0f0f0"></div>
<div class="tx" style="left:19px;top:261px;font-weight:bold;font-size:14px;line-height:15px;height:15px">i</div>
<div class="tx" style="left:33px;top:259px">003</div>
<div class="tx" style="left:79px;top:259px">Neurčeno</div>
<div style="position:absolute;left:149px;top:258px;width:70px;height:17px;background:#ff0000"></div>
<div class="tx" style="left:151px;top:259px;color:#fff">1</div>
<div class="cell" style="left:222px;top:259px;width:48px;height:16px">9ZRI002</div>
<div class="tx" style="left:271px;top:259px;width:85px;text-align:right">56.549</div>
<div style="position:absolute;left:359px;top:258px;width:87px;height:17px;background:#ffff80"></div>
<div class="tx" style="left:359px;top:259px;width:85px;text-align:right;font-weight:bold">0.000</div>
<div class="ab" style="left:453px;top:259px;width:24px;height:16px"><svg width="24" height="16" viewBox="0 0 24 16" shape-rendering="crispEdges" style="position:absolute;left:0;top:0"><use href="#vz"/></svg></div>
<div class="tx" style="left:484px;top:259px;width:66px;text-align:center">.&nbsp; .</div>
<div class="tx" style="left:578px;top:259px">/</div>
<div class="tx" style="left:603px;top:259px;width:96px;text-align:right">0.000</div>
<div class="cb" style="left:720px;top:260px"></div>
<div class="cb" style="left:756px;top:260px"></div>
<div style="position:absolute;left:14px;top:293px;width:761px;height:1px;background:#c0c0c0"></div>
<div style="position:absolute;left:30px;top:276px;width:1px;height:17px;background:#c0c0c0"></div>
<div style="position:absolute;left:56px;top:276px;width:1px;height:17px;background:#c0c0c0"></div>
<div style="position:absolute;left:76px;top:276px;width:1px;height:17px;background:#c0c0c0"></div>
<div style="position:absolute;left:148px;top:276px;width:1px;height:17px;background:#c0c0c0"></div>
<div style="position:absolute;left:219px;top:276px;width:1px;height:17px;background:#c0c0c0"></div>
<div style="position:absolute;left:270px;top:276px;width:1px;height:17px;background:#c0c0c0"></div>
<div style="position:absolute;left:358px;top:276px;width:1px;height:17px;background:#c0c0c0"></div>
<div style="position:absolute;left:446px;top:276px;width:1px;height:17px;background:#c0c0c0"></div>
<div style="position:absolute;left:483px;top:276px;width:1px;height:17px;background:#c0c0c0"></div>
<div style="position:absolute;left:550px;top:276px;width:1px;height:17px;background:#c0c0c0"></div>
<div style="position:absolute;left:602px;top:276px;width:1px;height:17px;background:#c0c0c0"></div>
<div style="position:absolute;left:701px;top:276px;width:1px;height:17px;background:#c0c0c0"></div>
<div style="position:absolute;left:751px;top:276px;width:1px;height:17px;background:#c0c0c0"></div>
<div style="position:absolute;left:774px;top:276px;width:1px;height:17px;background:#c0c0c0"></div>
<div style="position:absolute;left:14px;top:276px;width:16px;height:17px;background:#fff"></div>
<div style="position:absolute;left:15px;top:276px;width:14px;height:17px;background:#f0f0f0"></div>
<div class="tx" style="left:19px;top:279px;font-weight:bold;font-size:14px;line-height:15px;height:15px">i</div>
<div class="tx" style="left:33px;top:277px">004</div>
<div class="tx" style="left:79px;top:277px">Neurčeno</div>
<div style="position:absolute;left:149px;top:276px;width:70px;height:17px;background:#0000ff"></div>
<div class="tx" style="left:151px;top:277px;color:#fff">1</div>
<div class="cell" style="left:222px;top:277px;width:48px;height:16px">2015112</div>
<div class="tx" style="left:271px;top:277px;width:85px;text-align:right">68.390</div>
<div style="position:absolute;left:359px;top:276px;width:87px;height:17px;background:#ffff80"></div>
<div class="tx" style="left:359px;top:277px;width:85px;text-align:right;font-weight:bold">0.000</div>
<div class="ab" style="left:453px;top:277px;width:24px;height:16px"><svg width="24" height="16" viewBox="0 0 24 16" shape-rendering="crispEdges" style="position:absolute;left:0;top:0"><use href="#vz"/></svg></div>
<div class="tx" style="left:484px;top:277px;width:66px;text-align:center">.&nbsp; .</div>
<div class="tx" style="left:578px;top:277px">/</div>
<div class="tx" style="left:603px;top:277px;width:96px;text-align:right">0.000</div>
<div class="cb" style="left:720px;top:278px"></div>
<div class="cb" style="left:756px;top:278px"></div>
<div style="position:absolute;left:14px;top:311px;width:761px;height:1px;background:#c0c0c0"></div>
<div style="position:absolute;left:30px;top:294px;width:1px;height:17px;background:#c0c0c0"></div>
<div style="position:absolute;left:56px;top:294px;width:1px;height:17px;background:#c0c0c0"></div>
<div style="position:absolute;left:76px;top:294px;width:1px;height:17px;background:#c0c0c0"></div>
<div style="position:absolute;left:148px;top:294px;width:1px;height:17px;background:#c0c0c0"></div>
<div style="position:absolute;left:219px;top:294px;width:1px;height:17px;background:#c0c0c0"></div>
<div style="position:absolute;left:270px;top:294px;width:1px;height:17px;background:#c0c0c0"></div>
<div style="position:absolute;left:358px;top:294px;width:1px;height:17px;background:#c0c0c0"></div>
<div style="position:absolute;left:446px;top:294px;width:1px;height:17px;background:#c0c0c0"></div>
<div style="position:absolute;left:483px;top:294px;width:1px;height:17px;background:#c0c0c0"></div>
<div style="position:absolute;left:550px;top:294px;width:1px;height:17px;background:#c0c0c0"></div>
<div style="position:absolute;left:602px;top:294px;width:1px;height:17px;background:#c0c0c0"></div>
<div style="position:absolute;left:701px;top:294px;width:1px;height:17px;background:#c0c0c0"></div>
<div style="position:absolute;left:751px;top:294px;width:1px;height:17px;background:#c0c0c0"></div>
<div style="position:absolute;left:774px;top:294px;width:1px;height:17px;background:#c0c0c0"></div>
<div style="position:absolute;left:14px;top:294px;width:16px;height:17px;background:#fff"></div>
<div style="position:absolute;left:15px;top:294px;width:14px;height:17px;background:#f0f0f0"></div>
<div class="tx" style="left:19px;top:297px;font-weight:bold;font-size:14px;line-height:15px;height:15px">i</div>
<div class="tx" style="left:33px;top:295px">004</div>
<div class="tx" style="left:79px;top:295px">Neurčeno</div>
<div style="position:absolute;left:149px;top:294px;width:70px;height:17px;background:#0000ff"></div>
<div class="tx" style="left:151px;top:295px;color:#fff">1</div>
<div class="cell" style="left:222px;top:295px;width:48px;height:16px">8ZRI001</div>
<div class="tx" style="left:271px;top:295px;width:85px;text-align:right">386.861</div>
<div style="position:absolute;left:359px;top:294px;width:87px;height:17px;background:#ffff80"></div>
<div class="tx" style="left:359px;top:295px;width:85px;text-align:right;font-weight:bold">0.000</div>
<div class="ab" style="left:453px;top:295px;width:24px;height:16px"><svg width="24" height="16" viewBox="0 0 24 16" shape-rendering="crispEdges" style="position:absolute;left:0;top:0"><use href="#vz"/></svg></div>
<div class="tx" style="left:484px;top:295px;width:66px;text-align:center">.&nbsp; .</div>
<div class="tx" style="left:578px;top:295px">/</div>
<div class="tx" style="left:603px;top:295px;width:96px;text-align:right">0.000</div>
<div class="cb" style="left:720px;top:296px"></div>
<div class="cb" style="left:756px;top:296px"></div>
<div style="position:absolute;left:14px;top:329px;width:761px;height:1px;background:#c0c0c0"></div>
<div style="position:absolute;left:30px;top:312px;width:1px;height:17px;background:#c0c0c0"></div>
<div style="position:absolute;left:56px;top:312px;width:1px;height:17px;background:#c0c0c0"></div>
<div style="position:absolute;left:76px;top:312px;width:1px;height:17px;background:#c0c0c0"></div>
<div style="position:absolute;left:148px;top:312px;width:1px;height:17px;background:#c0c0c0"></div>
<div style="position:absolute;left:219px;top:312px;width:1px;height:17px;background:#c0c0c0"></div>
<div style="position:absolute;left:270px;top:312px;width:1px;height:17px;background:#c0c0c0"></div>
<div style="position:absolute;left:358px;top:312px;width:1px;height:17px;background:#c0c0c0"></div>
<div style="position:absolute;left:446px;top:312px;width:1px;height:17px;background:#c0c0c0"></div>
<div style="position:absolute;left:483px;top:312px;width:1px;height:17px;background:#c0c0c0"></div>
<div style="position:absolute;left:550px;top:312px;width:1px;height:17px;background:#c0c0c0"></div>
<div style="position:absolute;left:602px;top:312px;width:1px;height:17px;background:#c0c0c0"></div>
<div style="position:absolute;left:701px;top:312px;width:1px;height:17px;background:#c0c0c0"></div>
<div style="position:absolute;left:751px;top:312px;width:1px;height:17px;background:#c0c0c0"></div>
<div style="position:absolute;left:774px;top:312px;width:1px;height:17px;background:#c0c0c0"></div>
<div style="position:absolute;left:14px;top:312px;width:16px;height:17px;background:#fff"></div>
<div style="position:absolute;left:15px;top:312px;width:14px;height:17px;background:#f0f0f0"></div>
<div class="tx" style="left:19px;top:315px;font-weight:bold;font-size:14px;line-height:15px;height:15px">i</div>
<div class="tx" style="left:33px;top:313px">004</div>
<div class="tx" style="left:79px;top:313px">Neurčeno</div>
<div style="position:absolute;left:149px;top:312px;width:70px;height:17px;background:#ff0000"></div>
<div class="tx" style="left:151px;top:313px;color:#fff">1</div>
<div class="cell" style="left:222px;top:313px;width:48px;height:16px">2015160</div>
<div class="tx" style="left:271px;top:313px;width:85px;text-align:right">70.946</div>
<div style="position:absolute;left:359px;top:312px;width:87px;height:17px;background:#ffff80"></div>
<div class="tx" style="left:359px;top:313px;width:85px;text-align:right;font-weight:bold">0.000</div>
<div class="ab" style="left:453px;top:313px;width:24px;height:16px"><svg width="24" height="16" viewBox="0 0 24 16" shape-rendering="crispEdges" style="position:absolute;left:0;top:0"><use href="#vz"/></svg></div>
<div class="tx" style="left:484px;top:313px;width:66px;text-align:center">.&nbsp; .</div>
<div class="tx" style="left:578px;top:313px">/</div>
<div class="tx" style="left:603px;top:313px;width:96px;text-align:right">0.000</div>
<div class="cb" style="left:720px;top:314px"></div>
<div class="cb" style="left:756px;top:314px"></div>
<div style="position:absolute;left:14px;top:347px;width:761px;height:1px;background:#c0c0c0"></div>
<div style="position:absolute;left:30px;top:330px;width:1px;height:17px;background:#c0c0c0"></div>
<div style="position:absolute;left:56px;top:330px;width:1px;height:17px;background:#c0c0c0"></div>
<div style="position:absolute;left:76px;top:330px;width:1px;height:17px;background:#c0c0c0"></div>
<div style="position:absolute;left:148px;top:330px;width:1px;height:17px;background:#c0c0c0"></div>
<div style="position:absolute;left:219px;top:330px;width:1px;height:17px;background:#c0c0c0"></div>
<div style="position:absolute;left:270px;top:330px;width:1px;height:17px;background:#c0c0c0"></div>
<div style="position:absolute;left:358px;top:330px;width:1px;height:17px;background:#c0c0c0"></div>
<div style="position:absolute;left:446px;top:330px;width:1px;height:17px;background:#c0c0c0"></div>
<div style="position:absolute;left:483px;top:330px;width:1px;height:17px;background:#c0c0c0"></div>
<div style="position:absolute;left:550px;top:330px;width:1px;height:17px;background:#c0c0c0"></div>
<div style="position:absolute;left:602px;top:330px;width:1px;height:17px;background:#c0c0c0"></div>
<div style="position:absolute;left:701px;top:330px;width:1px;height:17px;background:#c0c0c0"></div>
<div style="position:absolute;left:751px;top:330px;width:1px;height:17px;background:#c0c0c0"></div>
<div style="position:absolute;left:774px;top:330px;width:1px;height:17px;background:#c0c0c0"></div>
<div style="position:absolute;left:14px;top:330px;width:16px;height:17px;background:#fff"></div>
<div style="position:absolute;left:15px;top:330px;width:14px;height:17px;background:#f0f0f0"></div>
<div class="tx" style="left:19px;top:333px;font-weight:bold;font-size:14px;line-height:15px;height:15px">i</div>
<div class="tx" style="left:33px;top:331px">004</div>
<div class="tx" style="left:79px;top:331px">Neurčeno</div>
<div style="position:absolute;left:149px;top:330px;width:70px;height:17px;background:#ff0000"></div>
<div class="tx" style="left:151px;top:331px;color:#fff">1</div>
<div class="cell" style="left:222px;top:331px;width:48px;height:16px">9ZRI002</div>
<div class="tx" style="left:271px;top:331px;width:85px;text-align:right">277.872</div>
<div style="position:absolute;left:359px;top:330px;width:87px;height:17px;background:#ffff80"></div>
<div class="tx" style="left:359px;top:331px;width:85px;text-align:right;font-weight:bold">0.000</div>
<div class="ab" style="left:453px;top:331px;width:24px;height:16px"><svg width="24" height="16" viewBox="0 0 24 16" shape-rendering="crispEdges" style="position:absolute;left:0;top:0"><use href="#vz"/></svg></div>
<div class="tx" style="left:484px;top:331px;width:66px;text-align:center">.&nbsp; .</div>
<div class="tx" style="left:578px;top:331px">/</div>
<div class="tx" style="left:603px;top:331px;width:96px;text-align:right">0.000</div>
<div class="cb" style="left:720px;top:332px"></div>
<div class="cb" style="left:756px;top:332px"></div>
<div style="position:absolute;left:14px;top:365px;width:761px;height:1px;background:#c0c0c0"></div>
<div style="position:absolute;left:30px;top:348px;width:1px;height:17px;background:#c0c0c0"></div>
<div style="position:absolute;left:56px;top:348px;width:1px;height:17px;background:#c0c0c0"></div>
<div style="position:absolute;left:76px;top:348px;width:1px;height:17px;background:#c0c0c0"></div>
<div style="position:absolute;left:148px;top:348px;width:1px;height:17px;background:#c0c0c0"></div>
<div style="position:absolute;left:219px;top:348px;width:1px;height:17px;background:#c0c0c0"></div>
<div style="position:absolute;left:270px;top:348px;width:1px;height:17px;background:#c0c0c0"></div>
<div style="position:absolute;left:358px;top:348px;width:1px;height:17px;background:#c0c0c0"></div>
<div style="position:absolute;left:446px;top:348px;width:1px;height:17px;background:#c0c0c0"></div>
<div style="position:absolute;left:483px;top:348px;width:1px;height:17px;background:#c0c0c0"></div>
<div style="position:absolute;left:550px;top:348px;width:1px;height:17px;background:#c0c0c0"></div>
<div style="position:absolute;left:602px;top:348px;width:1px;height:17px;background:#c0c0c0"></div>
<div style="position:absolute;left:701px;top:348px;width:1px;height:17px;background:#c0c0c0"></div>
<div style="position:absolute;left:751px;top:348px;width:1px;height:17px;background:#c0c0c0"></div>
<div style="position:absolute;left:774px;top:348px;width:1px;height:17px;background:#c0c0c0"></div>
<div style="position:absolute;left:14px;top:348px;width:16px;height:17px;background:#fff"></div>
<div style="position:absolute;left:15px;top:348px;width:14px;height:17px;background:#f0f0f0"></div>
<div class="tx" style="left:19px;top:351px;font-weight:bold;font-size:14px;line-height:15px;height:15px">i</div>
<div class="tx" style="left:33px;top:349px">005</div>
<div class="tx" style="left:79px;top:349px">Neurčeno</div>
<div style="position:absolute;left:149px;top:348px;width:70px;height:17px;background:#0000ff"></div>
<div class="tx" style="left:151px;top:349px;color:#fff">1</div>
<div class="cell" style="left:222px;top:349px;width:48px;height:16px">2015185</div>
<div class="tx" style="left:271px;top:349px;width:85px;text-align:right">90.191</div>
<div style="position:absolute;left:359px;top:348px;width:87px;height:17px;background:#ffff80"></div>
<div class="tx" style="left:359px;top:349px;width:85px;text-align:right;font-weight:bold">0.000</div>
<div class="ab" style="left:453px;top:349px;width:24px;height:16px"><svg width="24" height="16" viewBox="0 0 24 16" shape-rendering="crispEdges" style="position:absolute;left:0;top:0"><use href="#vz"/></svg></div>
<div class="tx" style="left:484px;top:349px;width:66px;text-align:center">.&nbsp; .</div>
<div class="tx" style="left:578px;top:349px">/</div>
<div class="tx" style="left:603px;top:349px;width:96px;text-align:right">0.000</div>
<div class="cb" style="left:720px;top:350px"></div>
<div class="cb" style="left:756px;top:350px"></div>
<div style="position:absolute;left:14px;top:383px;width:761px;height:1px;background:#c0c0c0"></div>
<div style="position:absolute;left:30px;top:366px;width:1px;height:17px;background:#c0c0c0"></div>
<div style="position:absolute;left:56px;top:366px;width:1px;height:17px;background:#c0c0c0"></div>
<div style="position:absolute;left:76px;top:366px;width:1px;height:17px;background:#c0c0c0"></div>
<div style="position:absolute;left:148px;top:366px;width:1px;height:17px;background:#c0c0c0"></div>
<div style="position:absolute;left:219px;top:366px;width:1px;height:17px;background:#c0c0c0"></div>
<div style="position:absolute;left:270px;top:366px;width:1px;height:17px;background:#c0c0c0"></div>
<div style="position:absolute;left:358px;top:366px;width:1px;height:17px;background:#c0c0c0"></div>
<div style="position:absolute;left:446px;top:366px;width:1px;height:17px;background:#c0c0c0"></div>
<div style="position:absolute;left:483px;top:366px;width:1px;height:17px;background:#c0c0c0"></div>
<div style="position:absolute;left:550px;top:366px;width:1px;height:17px;background:#c0c0c0"></div>
<div style="position:absolute;left:602px;top:366px;width:1px;height:17px;background:#c0c0c0"></div>
<div style="position:absolute;left:701px;top:366px;width:1px;height:17px;background:#c0c0c0"></div>
<div style="position:absolute;left:751px;top:366px;width:1px;height:17px;background:#c0c0c0"></div>
<div style="position:absolute;left:774px;top:366px;width:1px;height:17px;background:#c0c0c0"></div>
<div style="position:absolute;left:14px;top:366px;width:16px;height:17px;background:#fff"></div>
<div style="position:absolute;left:15px;top:366px;width:14px;height:17px;background:#f0f0f0"></div>
<div class="tx" style="left:19px;top:369px;font-weight:bold;font-size:14px;line-height:15px;height:15px">i</div>
<div class="tx" style="left:33px;top:367px">005</div>
<div class="tx" style="left:79px;top:367px">Neurčeno</div>
<div style="position:absolute;left:149px;top:366px;width:70px;height:17px;background:#0000ff"></div>
<div class="tx" style="left:151px;top:367px;color:#fff">1</div>
<div class="cell" style="left:222px;top:367px;width:48px;height:16px">0013488</div>
<div class="tx" style="left:271px;top:367px;width:85px;text-align:right">150.201</div>
<div style="position:absolute;left:359px;top:366px;width:87px;height:17px;background:#ffff80"></div>
<div class="tx" style="left:359px;top:367px;width:85px;text-align:right;font-weight:bold">0.000</div>
<div class="ab" style="left:453px;top:367px;width:24px;height:16px"><svg width="24" height="16" viewBox="0 0 24 16" shape-rendering="crispEdges" style="position:absolute;left:0;top:0"><use href="#vz"/></svg></div>
<div class="tx" style="left:484px;top:367px;width:66px;text-align:center">.&nbsp; .</div>
<div class="tx" style="left:578px;top:367px">/</div>
<div class="tx" style="left:603px;top:367px;width:96px;text-align:right">0.000</div>
<div class="cb" style="left:720px;top:368px"></div>
<div class="cb" style="left:756px;top:368px"></div>
<div class="ab" style="left:14px;top:60px;width:761px;height:18px;border:1px solid #0a74da;border-top:none"></div>
<div class="ab" style="left:14px;top:60px;width:16px;height:17px;border:1px solid #0a74da"></div>
<div style="position:absolute;left:776px;top:42px;width:16px;height:343px;background:#f0f0f0"></div>
<div style="position:absolute;left:776px;top:59px;width:15px;height:31px;background:#cdcdcd"></div>
<svg class="ab" style="left:776px;top:42px" width="16" height="17"><path d="M4.5 10.5L8 7L11.5 10.5" stroke="#606060" stroke-width="2" fill="none"/></svg>
<svg class="ab" style="left:776px;top:368px" width="16" height="17"><path d="M4.5 6.5L8 10L11.5 6.5" stroke="#606060" stroke-width="2" fill="none"/></svg>
<div style="position:absolute;left:15px;top:385px;width:761px;height:15px;background:#f0f0f0"></div>
<div style="position:absolute;left:31px;top:385px;width:81px;height:15px;background:#cdcdcd"></div>
<svg class="ab" style="left:15px;top:385px" width="16" height="15"><path d="M9 4.5L5 7.5L9 10.5" stroke="#606060" stroke-width="2" fill="none"/></svg>
<svg class="ab" style="left:760px;top:385px" width="16" height="15"><path d="M6 4L9.5 7.5L6 11" stroke="#606060" stroke-width="2" fill="none"/></svg>
<svg class="ab" style="left:13px;top:405px" width="781" height="39" viewBox="0 0 781 39" shape-rendering="crispEdges"><path d="M5 0.5H776L780.5 5V34L776 38.5H5L0.5 34V5Z" fill="#408080" stroke="#000" stroke-width="1"/></svg>
<div class="t" style="left:439px;top:418px;color:#f0f0f0;font-weight:bold;letter-spacing:2.9px">Celková spotřeba:</div>
<div class="ab" style="left:602px;top:413px;width:150px;height:24px;border:1px solid #5a5a5a;background:#ececf0;box-shadow:inset 1px 1px 0 #fff"></div>
<div class="t" style="left:602px;top:417px;width:145px;text-align:right;letter-spacing:0.25px">0.000000</div>
<div class="btn" style="left:14px;top:450px;width:124px">Navázat na jednotky</div>
<div class="ab" style="left:155px;top:456px;width:454px;height:16px;border-style:solid;border-width:2px;border-color:#a0a0a0 #fff #fff #a0a0a0;background:#f0f0f0"></div>
<div class="ab" style="left:156px;top:457px;width:452px;height:14px;border-style:solid;border-width:1px;border-color:#696969 #e3e3e3 #e3e3e3 #696969"></div>
<div class="btn" style="left:625px;top:450px;width:82px">Uložit</div>
<div class="btn" style="left:711px;top:450px;width:82px">Storno</div>
</body></html>
